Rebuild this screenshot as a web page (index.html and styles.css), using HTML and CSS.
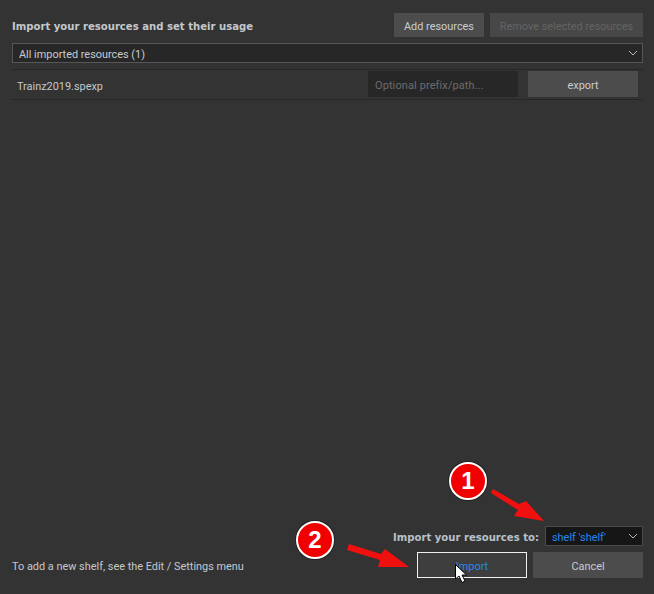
FILE: index.html
```html
<!DOCTYPE html>
<html lang="en">
<head>
<meta charset="utf-8">
<title>Import resources</title>
<link rel="stylesheet" href="styles.css">
</head>
<body>
<main class="dialog">
  <header class="top-row">
    <h1 class="title">Import your resources and set their usage</h1>
    <div class="top-actions">
      <button class="btn btn-add">Add resources</button>
      <button class="btn btn-remove" disabled>Remove selected resources</button>
    </div>
  </header>
  <div class="select select-all">
    <span>All imported resources (1)</span>
    <svg class="chev" viewBox="0 0 10 6"><path d="M1 1l4 4 4-4" /></svg>
  </div>
  <div class="resource-row">
    <span class="resource-name">Trainz2019.spexp</span>
    <span class="prefix">Optional prefix/path...</span>
    <button class="btn btn-export">export</button>
  </div>
  <div class="spacer"></div>
  <div class="target-row">
    <span class="target-label">Import your resources to:</span>
    <div class="select select-shelf">
      <span>shelf 'shelf'</span>
      <svg class="chev" viewBox="0 0 10 6"><path d="M1 1l4 4 4-4" /></svg>
    </div>
  </div>
  <footer class="bottom-row">
    <span class="hint">To add a new shelf, see the Edit / Settings menu</span>
    <div class="bottom-actions">
      <button class="btn btn-import">Import</button>
      <button class="btn btn-cancel">Cancel</button>
    </div>
  </footer>
</main>

<svg class="overlay" width="654" height="594" viewBox="0 0 654 594">
  <polygon fill="#f01010" points="491,493 493,489 519,504 526,501 544,521 514,516 518,510"/>
  <polygon fill="#f01010" points="347,550 349,544 381,554 385,549 409,567 378,567 380,560"/>
  <path d="M455.500 564.500v14.500l3.500-3 3 6.500 3-1.500-3-6h4.500z" fill="#fff" stroke="#000" stroke-width="1"/>
</svg>
<div class="badge badge-one">1</div>
<div class="badge badge-two">2</div>
</body>
</html>
```
FILE: styles.css
```css
* { box-sizing: border-box; }
html, body { margin: 0; height: 100%; }
body {
  width: 654px;
  height: 594px;
  overflow: hidden;
  position: relative;
  background: #333333;
  color: #c8c8c8;
  font-family: Roboto, "Open Sans", sans-serif;
  font-size: 10.9px;
}
.dialog {
  height: 594px;
  display: flex;
  flex-direction: column;
  padding: 13px 11px 16px 12px;
}
.top-row {
  display: flex;
  justify-content: space-between;
  align-items: center;
  height: 24px;
}
.title {
  margin: 2px 0 0;
  font-family: "DejaVu Sans", sans-serif;
  font-size: 10.1px;
  font-weight: 700;
  color: #c4c8cc;
}
.top-actions { display: flex; gap: 6px; }
.btn {
  border: 0;
  padding: 2px 0 0;
  font: inherit;
  color: #c8ccd0;
  background: #4c4c4c;
  text-align: center;
}
.btn-add { width: 90px; height: 24px; }
.btn-remove { width: 153px; height: 24px; color: #646464; background: #474747; }
.select {
  display: flex;
  align-items: center;
  justify-content: space-between;
  height: 20px;
  border: 1px solid #565656;
  background: #272727;
  padding: 2px 4px 0 6px;
  color: #c8ccd0;
}
.select-all { margin-top: 6px; }
.chev { width: 10px; height: 6px; flex: none; margin-top: -2px; }
.chev path { fill: none; stroke: #b4b4b4; stroke-width: 1; }
.resource-row {
  display: flex;
  align-items: center;
  height: 31px;
  margin-top: 6px;
  padding-bottom: 1px;
  border-top: 1px solid #272727;
  border-bottom: 1px solid #272727;
}
.resource-name { margin: 5px 0 0 5px; flex: 1; color: #c4c8cc; }
.prefix {
  width: 150px;
  height: 26px;
  line-height: 29px;
  padding-left: 7px;
  letter-spacing: 0.15px;
  background: #272727;
  color: #6c6c6c;
}
.btn-export { width: 110px; height: 26px; margin: 0 5px 0 10px; }
.spacer { flex: 1; }
.target-row {
  display: flex;
  justify-content: flex-end;
  align-items: center;
  gap: 6px;
}
.target-label {
  margin-top: 2px;
  font-family: "DejaVu Sans", sans-serif;
  font-size: 10.1px;
  font-weight: 700;
  color: #b8c0c8;
}
.select-shelf {
  width: 98px;
  background: #161616;
  border-color: #4a4a4a;
  color: #2288ee;
}
.bottom-row {
  display: flex;
  justify-content: space-between;
  align-items: center;
  margin-top: 6px;
}
.hint { margin-top: 2px; color: #c4c8cc; }
.bottom-actions { display: flex; gap: 6px; }
.btn-import {
  width: 110px;
  height: 26px;
  background: #3e3e3e;
  border: 1px solid #f0f0f0;
  color: #2288ee;
}
.btn-cancel { width: 110px; height: 26px; }
.overlay { position: absolute; left: 0; top: 0; pointer-events: none; }
.badge {
  position: absolute;
  width: 38px;
  height: 38px;
  border-radius: 50%;
  background: #f00000;
  border: 2px solid #fff;
  box-shadow: 0 0 0 1px #222;
  color: #fff;
  font-family: "Liberation Sans", sans-serif;
  font-weight: 700;
  font-size: 24px;
  line-height: 33px;
  text-align: center;
}
.badge-one { left: 449px; top: 462px; }
.badge-two { left: 296px; top: 521px; }
```
